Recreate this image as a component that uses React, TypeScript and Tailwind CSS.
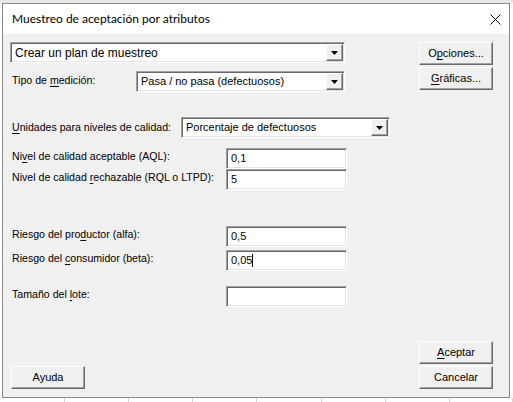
import React from 'react';

const ui = { fontFamily: '"Liberation Sans", Arial, sans-serif' };
const sunken =
  'border border-t-[#a0a0a0] border-l-[#a0a0a0] border-r-white border-b-white shadow-[inset_1px_1px_0_#696969,inset_-1px_-1px_0_#e3e3e3]';
const raised =
  'border border-t-white border-l-white border-r-[#696969] border-b-[#696969] shadow-[inset_-1px_-1px_0_#a0a0a0]';

function U({ children }: { children: React.ReactNode }) {
  return <span className="underline underline-offset-2">{children}</span>;
}

function Combo({ width, value, big }: { width: string; value: string; big?: boolean }) {
  return (
    <div className={`${width} h-[21px] flex items-stretch bg-white ${sunken} p-[1px]`}>
      <div className={`flex-1 flex items-center pl-[3px] ${big ? 'text-[12px]' : 'text-[11px]'} text-black leading-none`}>{value}</div>
      <div className={`w-[17px] bg-[#f0f0f0] flex items-center justify-center ${raised}`}>
        <svg width="7" height="4" viewBox="0 0 7 4">
          <path d="M0 0h7L3.5 4z" fill="#000" />
        </svg>
      </div>
    </div>
  );
}

function Field({ value, caret }: { value: string; caret?: boolean }) {
  return (
    <div className={`w-[121px] h-[21px] bg-white ${sunken} flex items-center pl-[4px] text-[11px] text-black`}>
      {value}
      {caret && <span className="inline-block w-px h-[13px] bg-black" />}
    </div>
  );
}

function Btn({ children, className = '' }: { children: React.ReactNode; className?: string }) {
  return (
    <button className={`w-[74px] h-[23px] bg-[#f0f0f0] ${raised} text-[11px] text-black flex items-center justify-center ${className}`}>
      {children}
    </button>
  );
}

function Row({ label, children, className = '' }: { label: React.ReactNode; children: React.ReactNode; className?: string }) {
  return (
    <div className={`flex items-center ${className}`}>
      <div className="w-[216px] pl-[2px] text-[10.6px] text-black -mt-[3px]">{label}</div>
      {children}
    </div>
  );
}

export default function App() {
  const cols = [65, 64, 64, 64, 65, 64, 64, 63];
  return (
    <div className="w-[513px] h-[402px] bg-white relative overflow-hidden" style={ui}>
      <div className="h-[3px] bg-[#e6e6e6]" />
      <div className="ml-[2px] w-[508px] h-[395px] border border-[#8a8a8a] bg-[#f0f0f0] flex flex-col">
        {/* Title bar */}
        <div className="h-[30px] bg-white flex items-center justify-between pl-[9px] pr-[8px]">
          <span className="text-[12px] text-black -mt-[1px]" style={{ fontFamily: 'Lato, "Liberation Sans", sans-serif' }}>
            Muestreo de aceptación por atributos
          </span>
          <svg width="11" height="11" viewBox="0 0 11 11">
            <path d="M0.5 0.5L10.5 10.5M10.5 0.5L0.5 10.5" stroke="#000" strokeWidth="1" />
          </svg>
        </div>

        {/* Body */}
        <div className="flex-1 flex flex-col pl-[7px] pr-[16px] pb-[8px]">
          <div className="flex justify-between">
            <div className="w-[380px] flex flex-col">
              <div className="mt-[8px]">
                <Combo width="w-[335px]" value="Crear un plan de muestreo" big />
              </div>
              <div className="mt-[8px] flex items-center">
                <div className="w-[126px] pl-[2px] text-[10.6px] text-black -mt-[2px]">
                  Tipo de <U>m</U>edición:
                </div>
                <Combo width="w-[209px]" value="Pasa / no pasa (defectuosos)" />
              </div>
              <div className="mt-[25px] flex items-center">
                <div className="w-[171px] pl-[2px] text-[10.6px] text-black">
                  <U>U</U>nidades para niveles de calidad:
                </div>
                <Combo width="w-[209px]" value="Porcentaje de defectuosos" />
              </div>
              <Row className="mt-[10px]" label={<>Ni<U>v</U>el de calidad aceptable (AQL):</>}>
                <Field value="0,1" />
              </Row>
              <Row label={<>Nivel de calidad <U>r</U>echazable (RQL o LTPD):</>}>
                <Field value="5" />
              </Row>
              <Row className="mt-[36px]" label={<>Riesgo del pro<U>d</U>uctor (alfa):</>}>
                <Field value="0,5" />
              </Row>
              <Row className="mt-[3px]" label={<>Riesgo del <U>c</U>onsumidor (beta):</>}>
                <Field value="0,05" caret />
              </Row>
              <Row className="mt-[15px]" label={<>Tamaño del <U>l</U>ote:</>}>
                <Field value="" />
              </Row>
            </div>
            <div className="flex flex-col gap-[2px] mt-[8px]">
              <Btn>O<U>p</U>ciones...</Btn>
              <Btn><U>G</U>ráficas...</Btn>
            </div>
          </div>

          <div className="mt-auto flex justify-between items-end">
            <Btn className="ml-[1px]">Ayuda</Btn>
            <div className="flex flex-col gap-[2px]">
              <Btn><U>A</U>ceptar</Btn>
              <Btn>Cancelar</Btn>
            </div>
          </div>
        </div>
      </div>
      {/* spreadsheet behind */}
      <div className="flex h-[4px]">
        {cols.map((w, i) => (
          <div key={i} className="h-full border-r border-[#d4d4d4]" style={{ width: w }} />
        ))}
      </div>
    </div>
  );
}
